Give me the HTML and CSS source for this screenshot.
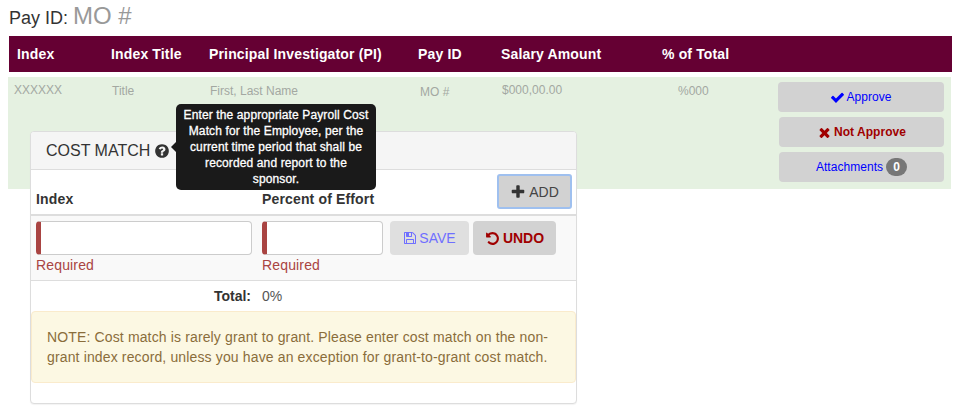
FILE: index.html
```html
<!DOCTYPE html>
<html lang="en">
<head>
<meta charset="utf-8">
<title>Pay ID</title>
<link rel="stylesheet" href="styles.css">
</head>
<body>
<h1 class="page-title">Pay ID: <span class="page-id">MO #</span></h1>
<div class="head-row">
  <div>Index</div><div>Index Title</div><div>Principal Investigator (PI)</div><div>Pay ID</div><div>Salary Amount</div><div>% of Total</div><div></div>
</div>
<div class="data-row">
  <div class="cell up">XXXXXX</div>
  <div class="cell">Title</div>
  <div class="cell">First, Last Name</div>
  <div class="cell down">MO #</div>
  <div class="cell up">$000,00.00</div>
  <div class="cell">%000</div>
  <div class="actions">
    <button class="act act-first blue"><svg class="ic-check" viewBox="0 0 1792 1792"><path d="M1671 566q0 40-28 68l-724 724-136 136q-28 28-68 28t-68-28l-136-136-362-362q-28-28-28-68t28-68l136-136q28-28 68-28t68 28l294 295 656-657q28-28 68-28t68 28l136 136q28 28 28 68z"/></svg> Approve</button>
    <button class="act red"><svg class="ic-times" viewBox="0 0 1792 1792"><path d="M1490 1322q0 40-28 68l-136 136q-28 28-68 28t-68-28l-294-294-294 294q-28 28-68 28t-68-28l-136-136q-28-28-28-68t28-68l294-294-294-294q-28-28-28-68t28-68l136-136q28-28 68-28t68 28l294 294 294-294q28-28 68-28t68 28l136 136q28 28 28 68t-28 68l-294 294 294 294q28 28 28 68z"/></svg> Not Approve</button>
    <button class="act blue">Attachments <span class="badge">0</span></button>
  </div>
</div>
<section class="panel">
  <header class="panel-head">
    COST MATCH
    <svg class="help" viewBox="0 0 1792 1792"><path d="M1024 1376v-192q0-14-9-23t-23-9h-192q-14 0-23 9t-9 23v192q0 14 9 23t23 9h192q14 0 23-9t9-23zm256-672q0-88-55.5-163t-138.5-116-170-41q-243 0-371 213-15 24 8 42l132 100q7 6 19 6 16 0 25-12 53-68 86-92 34-24 86-24 48 0 85.5 26t37.5 59q0 38-20 61t-68 45q-63 28-115.5 86.5t-52.5 125.5v36q0 14 9 23t23 9h192q14 0 23-9t9-23q0-19 21.5-49.5t54.5-49.5q32-18 49-28.5t46-35 44.5-48 28-60.5 12.5-81zm384 192q0 209-103 385.5t-279.5 279.5-385.5 103-385.5-103-279.5-279.5-103-385.5 103-385.5 279.5-279.5 385.5-103 385.5 103 279.5 279.5 103 385.5z"/></svg>
    <div class="tooltip">Enter the appropriate Payroll Cost<br>Match for the Employee, per the<br>current time period that shall be<br>recorded and report to the<br>sponsor.</div>
  </header>
  <div class="col-row">
    <div class="col-index">Index</div>
    <div class="col-effort">Percent of Effort</div>
    <button class="add"><svg class="ic-add" viewBox="0 0 1792 1792"><path d="M1600 736v192q0 40-28 68t-68 28h-416v416q0 40-28 68t-68 28h-192q-40 0-68-28t-28-68v-416h-416q-40 0-68-28t-28-68v-192q0-40 28-68t68-28h416v-416q0-40 28-68t68-28h192q40 0 68 28t28 68v416h416q40 0 68 28t28 68z"/></svg> ADD</button>
  </div>
  <div class="form-row">
    <div class="field field-index"><input class="input" type="text"><div class="req">Required</div></div>
    <div class="field field-effort"><input class="input" type="text"><div class="req">Required</div></div>
    <button class="btn save"><svg class="ic-save" viewBox="0 0 1792 1792"><path d="M512 1536h768v-384h-768v384zm896 0h128v-896q0-14-10-38.5t-20-34.5l-281-281q-10-10-34-20t-39-10v416q0 40-28 68t-68 28h-576q-40 0-68-28t-28-68v-416h-128v1280h128v-416q0-40 28-68t68-28h832q40 0 68 28t28 68v416zm-384-928v-320q0-13-9.5-22.5t-22.5-9.5h-192q-13 0-22.5 9.5t-9.5 22.5v320q0 13 9.5 22.5t22.5 9.5h192q13 0 22.5-9.5t9.5-22.5zm640 32v928q0 40-28 68t-68 28h-1344q-40 0-68-28t-28-68v-1344q0-40 28-68t68-28h928q40 0 88 20t76 48l280 280q28 28 48 76t20 88z"/></svg> SAVE</button>
    <button class="btn undo"><svg class="ic-undo" viewBox="0 0 1792 1792"><path d="M1664 896q0 156-61 298t-164 245-245 164-298 61q-172 0-327-72.5t-264-204.5q-7-10-6.5-22.5t8.5-20.5l137-138q10-9 25-9 16 2 23 12 73 95 179 147t225 52q104 0 198.5-40.5t163.5-109.5 109.5-163.5 40.5-198.5-40.5-198.5-109.5-163.5-163.5-109.5-198.5-40.5q-98 0-188 35.5t-160 101.5l137 138q31 30 14 69-17 40-59 40h-448q-26 0-45-19t-19-45v-448q0-42 40-59 39-17 69 14l130 129q107-101 244.5-156.5t284.5-55.5q156 0 298 61t245 164 164 245 61 298z"/></svg> UNDO</button>
  </div>
  <div class="total-row"><div class="total-label">Total:</div><div class="total-value">0%</div></div>
  <div class="note">NOTE: Cost match is rarely grant to grant. Please enter cost match on the non-grant index record, unless you have an exception for grant-to-grant cost match.</div>
</section>
</body>
</html>
```
FILE: styles.css
```css
* { box-sizing: border-box; }
html, body { margin: 0; padding: 0; background: #fff; }
body { width: 965px; height: 420px; overflow: hidden; font-family: "Liberation Sans", Arial, sans-serif; font-size: 14px; color: #333; }

.page-title { margin: 0; height: 36px; padding: 4px 0 0 9px; font-size: 18px; font-weight: 400; line-height: 24px; color: #333; }
.page-id { font-size: 24px; color: #999; }

.head-row { display: grid; grid-template-columns: 94px 98px 209px 83px 161px 1fr; width: 943px; height: 36px; margin-left: 9px; padding-left: 8px; background: #650033; color: #fff; font-size: 14px; font-weight: 700; line-height: 36px; letter-spacing: 0.15px; }

.data-row { display: grid; grid-template-columns: 98px 98px 210px 82px 176px 100px 1fr; width: 943px; height: 112px; margin: 5px 0 0 8px; padding-left: 6px; background: #e5f1e1; color: #a3a8a1; font-size: 12px; }
.cell { padding-top: 6px; line-height: 16px; }
.cell.up { padding-top: 5px; }
.cell.down { padding-top: 7px; }

.actions { display: flex; flex-direction: column; gap: 5px; padding-top: 5px; }
.act { width: 165px; height: 30px; margin-left: 1px; padding: 0; border: 0; border-radius: 4px; background: #d2d2d2; font-family: inherit; font-size: 12px; display: flex; align-items: center; justify-content: center; letter-spacing: 0.05px; }
.act-first { width: 166px; margin-left: 0; }
.blue { color: #00f; fill: #00f; }
.red { color: #a00000; fill: #a00000; font-weight: 700; }
.ic-check { width: 15px; height: 15px; flex: none; margin-right: 1px; }
.ic-times { width: 15px; height: 15px; flex: none; margin-right: 2px; }
.badge { display: inline-block; min-width: 21px; height: 18px; margin-left: 3px; border-radius: 9px; background: #777; color: #fff; font-size: 12px; font-weight: 700; line-height: 18px; text-align: center; }

.panel { position: relative; width: 547px; height: 273px; margin: -58px 0 0 30px; border: 1px solid #ddd; border-radius: 4px; background: #fff; box-shadow: 0 1px 1px rgba(0,0,0,.05); }
.panel-head { position: relative; height: 38px; padding-left: 15px; background: #f5f5f5; border-bottom: 1px solid #ddd; border-radius: 3px 3px 0 0; font-size: 16px; line-height: 36px; color: #333; display: flex; align-items: center; gap: 4px; }
.help { width: 16px; height: 16px; fill: #333; }
.tooltip { position: absolute; left: 145px; top: -28px; width: 200px; height: 86px; padding: 3px 0; border-radius: 5px; background: #1a1a1a; color: #fff; font-size: 12px; font-weight: 400; line-height: 16px; letter-spacing: 0.12px; text-align: center; white-space: nowrap; -webkit-text-stroke: 0.3px #fff; z-index: 2; }
.tooltip::before { content: ""; position: absolute; left: -5px; top: 38px; border-style: solid; border-width: 5px 5px 5px 0; border-color: transparent #1a1a1a transparent transparent; }

.col-row { display: flex; height: 46px; border-bottom: 2px solid #ddd; font-weight: 700; line-height: 20px; letter-spacing: 0.15px; }
.col-index { width: 231px; padding: 19px 0 0 5px; }
.col-effort { width: 235px; padding-top: 19px; }
.add { width: 75px; height: 35px; margin-top: 4px; border: 2px solid #9fc0ef; border-radius: 3px; background: #d2d2d2; color: #444; fill: #333; font-family: inherit; font-size: 14px; padding: 0; display: flex; align-items: center; justify-content: center; gap: 3px; }
.ic-add { width: 16px; height: 16px; }

.form-row { display: flex; height: 65px; padding: 5px 0 0 5px; background: #f9f9f9; border-bottom: 1px solid #ddd; }
.field { flex: none; }
.field-index { width: 226px; }
.field-effort { width: 128px; }
.input { display: block; height: 34px; padding: 0; background: #fff; border: 1px solid #ccc; border-left: 5px solid #a94442; border-radius: 4px; }
.field-index .input { width: 216px; }
.field-effort .input { width: 121px; }
.req { margin-top: 0; color: #a94442; font-size: 14px; line-height: 20px; letter-spacing: 0.15px; }
.btn { height: 34px; padding: 0; border: 0; border-radius: 4px; font-family: inherit; font-size: 14px; display: flex; align-items: center; justify-content: center; gap: 3px; }
.ic-save { width: 14px; height: 14px; }
.ic-undo { width: 15px; height: 15px; }
.save { width: 79px; margin-right: 4px; gap: 2px; background: #dfdfdf; color: #6f6fff; fill: #6f6fff; }
.undo { width: 83px; background: #d2d2d2; color: #a00000; fill: #a00000; font-weight: 700; }

.total-row { display: flex; height: 30px; line-height: 30px; }
.total-label { width: 220px; text-align: right; font-weight: 700; }
.total-value { padding-left: 11px; color: #555; }

.note { height: 72px; padding: 15px; background: #fcf8e3; border: 1px solid #faebcc; border-radius: 4px; color: #8a6d3b; font-size: 14px; line-height: 20px; letter-spacing: 0.14px; }
```
